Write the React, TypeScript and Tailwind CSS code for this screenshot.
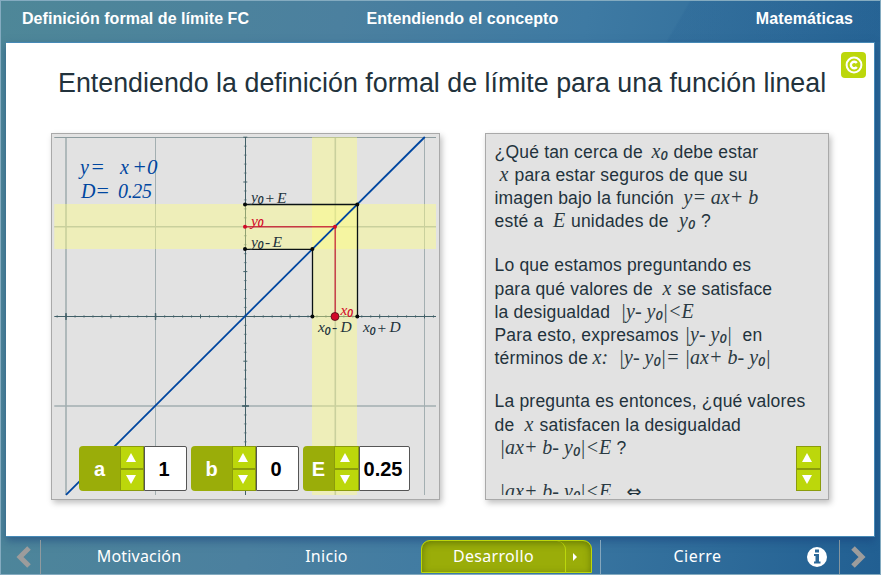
import type { ReactNode } from "react";

const SANS = "font-['Liberation_Sans',Arial,sans-serif]";
const SERIF = "font-['Liberation_Serif','Times_New_Roman',serif]";

function M({ children, w = "" }: { children: ReactNode; w?: string }) {
  return <span className={`inline-block ${SERIF} text-[20px] italic tracking-normal leading-[23px] text-[#2b3a43] ${w}`}>{children}</span>;
}

function Sub({ v }: { v: string }) {
  return (
    <>
      {v}
      <span className="relative top-[2px] font-['Open_Sans','Liberation_Sans',sans-serif] text-[13px] font-semibold leading-none">0</span>
    </>
  );
}

function T({ children, w = "" }: { children: ReactNode; w?: string }) {
  return <span className={`inline-block ${w}`}>{children}</span>;
}

function Line({ children }: { children: ReactNode }) {
  return <div className="flex h-[23px] items-baseline whitespace-pre leading-[23px]">{children}</div>;
}

function Spinner({ width }: { width: string }) {
  return (
    <div className={`flex h-[45px] flex-col border border-[#8b9c0b] bg-[#bcd70b] ${width}`}>
      <div className="flex flex-1 items-center justify-center border-b-2 border-[#8b9c0b] pr-[3px]">
        <svg width="10" height="9" viewBox="0 0 10 9"><path d="M5 0 10 9H0Z" fill="#fff" /></svg>
      </div>
      <div className="flex flex-1 items-center justify-center pr-[3px]">
        <svg width="10" height="9" viewBox="0 0 10 9"><path d="M5 9 10 0H0Z" fill="#fff" /></svg>
      </div>
    </div>
  );
}

function Control({ label, value, labelW, spinW, valueW }: { label: string; value: string; labelW: string; spinW: string; valueW: string }) {
  return (
    <div className="flex h-[45px] text-[20px] font-bold">
      <div className={`flex items-center justify-center rounded-l-[4px] bg-[#9aad09] text-white ${labelW}`}>{label}</div>
      <Spinner width={spinW} />
      <div className={`flex items-center justify-center rounded-r-[2px] border border-[#555] bg-white pr-[3px] text-black ${valueW}`}>{value}</div>
    </div>
  );
}

const OX = 245.3;
const OY = 316.4;
const U = 89.6;

function Zero({ x, y }: { x: number; y: number }) {
  return <text x={x} y={y} fontSize="11" fontWeight="600" fontFamily="'Open Sans', 'Liberation Sans', sans-serif">0</text>;
}

function Plot() {
  const minor = Array.from({ length: 43 }, (_, i) => i - 21);
  return (
    <svg className={`block ${SERIF}`} width="387" height="365" viewBox="52 134 387 365">
      <g stroke="#a3afb1" strokeWidth="1.2">
        <path d="M66 137V495" strokeWidth="1.6" />
        <path d="M155.5 137V495M424.5 137V495" strokeWidth="1" />
        <path d="M335.3 137V495M54.3 226.7H436M54.3 406H436" strokeWidth="1.6" />
        <path d="M54.3 137.5H436" stroke="#8d9c9f" strokeWidth="1" />
      </g>
      <g stroke="#426068" strokeWidth="1">
        <path d="M54.3 316.5H436M245.5 137V495" />
        {minor.map((i) => {
          const x = OX + (i * U) / 10;
          const y = OY - (i * U) / 10;
          const r = i % 5 === 0 ? 2 : 1.4;
          const op = i % 5 === 0 ? 1 : 0.6;
          return (
            <g key={i} opacity={op}>
              {x < 436 && x > 54.3 && <path d={`M${x} ${OY - r}V${OY + r}`} />}
              {y < 495 && y > 136 && <path d={`M${OX - r} ${y}H${OX + r}`} />}
            </g>
          );
        })}
        <path d="M66 313V320M155.5 313V320M242 406H249" strokeWidth="1.4" />
      </g>
      <rect x="54.3" y="204" width="381.7" height="45" fill="#ffff80" fillOpacity=".42" />
      <rect x="312" y="137" width="45" height="358" fill="#ffff80" fillOpacity=".42" />
      <path d="M66 494.8 424.8 137" stroke="#0046a0" strokeWidth="1.8" />
      <path d="M245 204.5H357.5V316.4M245 249.4H312.5V316.4" fill="none" stroke="#0a1214" strokeWidth="1.3" />
      <path d="M245 226.8H335.2V316.4" fill="none" stroke="#c8102e" strokeOpacity=".8" strokeWidth="1.4" />
      <g fill="#05090a">
        <circle cx="245" cy="204.4" r="2" /><circle cx="245" cy="249" r="2" />
        <circle cx="357.3" cy="204.4" r="2" /><circle cx="312.4" cy="249" r="2" />
        <circle cx="312.4" cy="316.4" r="2" /><circle cx="357.3" cy="316.4" r="2" />
      </g>
      <g fill="#d20a28">
        <circle cx="245" cy="226.7" r="2" /><circle cx="335" cy="226.7" r="2" />
        <circle cx="335" cy="316.5" r="4" stroke="#4a1018" strokeWidth=".8" />
      </g>
      <g fill="#0046a0" fontStyle="italic" fontSize="20">
        <text x="80" y="174">y</text><text x="91.500" y="174" fontStyle="normal" fontSize="22">=</text>
        <text x="120" y="174">x</text><text x="133.500" y="174" fontStyle="normal" fontSize="22">+</text><text x="147" y="174" fontSize="21">0</text>
        <text x="81" y="198">D</text><text x="96.500" y="198" fontStyle="normal" fontSize="22">=</text>
        <text x="118" y="198" textLength="34">0.25</text>
      </g>
      <g fill="#22323c" fontStyle="italic" fontSize="15.500">
        <text x="251" y="202">y</text><Zero x={257.5} y={204} />
        <text x="265.500" y="203" fontStyle="normal">+</text><text x="277" y="202.500">E</text>
        <text x="251" y="247">y</text><Zero x={257.5} y={249} />
        <text x="265" y="247" fontStyle="normal">-</text><text x="272.500" y="247.300">E</text>
        <text x="318" y="332">x</text><Zero x={324.5} y={334.5} />
        <text x="332" y="332" fontStyle="normal">-</text><text x="340.500" y="332.300">D</text>
        <text x="363" y="332">x</text><Zero x={369.5} y={334.5} />
        <text x="377.500" y="332.500" fontStyle="normal">+</text><text x="389.500" y="332.300">D</text>
      </g>
      <g fill="#d20a28" fontStyle="italic" fontSize="15.500">
        <text x="251" y="225.500">y</text><Zero x={257.5} y={227} />
        <text x="340.500" y="315">x</text><Zero x={347} y={316.5} />
      </g>
    </svg>
  );
}

export default function App() {
  const panel = "relative overflow-visible border border-[#a9a9a9] bg-[#e2e2e2] shadow-[2px_3px_6px_rgba(0,0,0,0.25)]";
  return (
    <div className={`flex h-[575px] w-[881px] flex-col overflow-hidden border border-[#84abc0] bg-[linear-gradient(100deg,#4e8798_0%,#4b809f_35%,#3e7aa3_60%,#2f6c9a_82%,#215f92_100%)] ${SANS}`}>
      <header className="flex h-[41px] shrink-0 justify-between bg-[linear-gradient(120deg,transparent_76.2%,rgba(25,85,140,0.15)_76.5%)] pl-[21px] pr-[27px] pt-[6px] text-[16px] font-bold leading-[24px] text-white">
        <span className="w-[344.5px] tracking-[0.04px]">Definición formal de límite FC</span>
        <span className="flex-1 whitespace-nowrap tracking-[0.07px]">Entendiendo el concepto</span>
        <span className="text-right tracking-[0.1px]">Matemáticas</span>
      </header>

      <main className="relative z-10 ml-[5px] mr-[5px] h-[495px] shrink-0 border-y border-r border-[#4689b6] bg-white shadow-[0_4px_8px_rgba(20,60,120,0.5)]">
        <div className="absolute right-[8px] top-[9px] flex h-[26px] w-[25px] items-center justify-center rounded-[4px] bg-[#bcd70b]">
          <svg width="18" height="18" viewBox="0 0 18 18" fill="none" stroke="#fff" strokeWidth="2">
            <circle cx="9" cy="9" r="7.400" />
            <path d="M11.800 7A3.300 3.300 0 1 0 11.800 11" strokeWidth="2.400" />
          </svg>
        </div>
        <h1 className="h-[90px] pl-[52px] pt-[24px] text-[26.800px] tracking-[0.015px] leading-[32px] whitespace-nowrap text-[#22323c]">
          Entendiendo la definición formal de límite para una función lineal
        </h1>
        <div className="flex gap-[45px] pl-[45px]">
          <section className={`h-[367px] w-[389px] ${panel}`}>
            <Plot />
            <div className="absolute left-[27px] top-[312px] flex gap-[4px]">
              <Control label="a" value="1" labelW="w-[41px]" spinW="w-[24px]" valueW="w-[43px]" />
              <Control label="b" value="0" labelW="w-[41px]" spinW="w-[24px]" valueW="w-[43px]" />
              <Control label="E" value="0.25" labelW="w-[31px]" spinW="w-[25px]" valueW="w-[51px]" />
            </div>
          </section>

          <section className={`h-[367px] w-[344px] ${panel}`}>
            <div className="h-[361px] overflow-hidden pl-[8.500px] pt-[6px] text-[17.500px] tracking-[0.2px] text-[#22323c]">
              <Line><T w="w-[157px]">¿Qué tan cerca de</T><M w="w-[22px]"><Sub v="x" /></M><T>debe estar</T></Line>
              <Line><M w="ml-[5px] w-[15px]">x</M><T>para estar seguros de que su</T></Line>
              <Line><T w="w-[189px]">imagen bajo la función</T><M>y= ax+ b</M></Line>
              <Line><T w="w-[58.500px]">esté a</T><M w="w-[18px]">E</M><T w="w-[108px]">unidades de</T><M w="w-[22px]"><Sub v="y" /></M><T>?</T></Line>
              <div className="h-[22px]" />
              <Line><T>Lo que estamos preguntando es</T></Line>
              <Line><T w="w-[168px]">para qué valores de</T><M w="w-[15px]">x</M><T>se satisface</T></Line>
              <Line><T w="w-[126px]">la desigualdad</T><M>|y- <Sub v="y" />|&lt;E</M></Line>
              <Line><T w="w-[190px]">Para esto, expresamos</T><M w="w-[58px]">|y- <Sub v="y" />|</M><T>en</T></Line>
              <Line><T w="w-[98px]">términos de</T><M w="w-[26px]">x:</M><M>|y- <Sub v="y" />|= |ax+ b- <Sub v="y" />|</M></Line>
              <div className="h-[21px]" />
              <Line><T>La pregunta es entonces, ¿qué valores</T></Line>
              <Line><T w="w-[30px]">de</T><M w="w-[15px]">x</M><T>satisfacen la desigualdad</T></Line>
              <Line><M w="ml-[5px] w-[117px]">|ax+ b- <Sub v="y" />|&lt;E</M><T>?</T></Line>
              <div className="h-[21px]" />
              <Line><M w="ml-[5px] w-[127px]">|ax+ b- <Sub v="y" />|&lt;E</M><span className="font-['DejaVu_Sans',sans-serif] text-[18px] leading-[23px]">⇔</span></Line>
            </div>
            <div className="absolute left-[310px] top-[312px]"><Spinner width="w-[25px]" /></div>
          </section>
        </div>
      </main>

      <footer className="relative z-20 flex h-[37px] shrink-0 pt-[3px] font-['Noto_Sans','Open_Sans',sans-serif] text-[16px] leading-[32px] text-white">
        <div className="flex w-[40px] items-center justify-center border-r border-[#8f9a9f] pl-[6px]">
          <svg width="16" height="22" viewBox="0 0 16 22"><path d="M13 2 4 11l9 9" fill="none" stroke="#9c9c9c" strokeWidth="5" /></svg>
        </div>
        <span className="w-[196px] text-center tracking-[0.2px]">Motivación</span>
        <span className="w-[179px] text-center tracking-[0.3px]">Inicio</span>
        <div className="ml-[5px] flex h-[33px] w-[171px] rounded-t-[9px] border border-[#bcd70b] bg-[#9aad09] shadow-[inset_0_2px_7px_rgba(70,90,0,0.6)]">
          <span className="w-[144px] rounded-tr-[9px] border-r border-[#bcd70b] text-center leading-[30px] tracking-[0.3px]">Desarrollo</span>
          <span className="flex flex-1 items-center justify-center pr-[8px]"><svg width="4" height="8" viewBox="0 0 4 8"><path d="M0 0 4 4 0 8Z" fill="#fff" /></svg></span>
        </div>
        <span className="ml-[8px] w-[207px] border-l border-[#84a6bd] pr-[13px] text-center tracking-[0.5px]">Cierre</span>
        <div className="flex w-[32px] items-center">
          <svg width="20" height="20" viewBox="0 0 20 20"><circle cx="10" cy="10" r="10" fill="#fff" /><path d="M8 2.500H12V5.500H8ZM7 7H12V14.500H13.500V16.500H7V14.500H8.500V9H7Z" fill="#2b6898" /></svg>
        </div>
        <div className="flex flex-1 items-center justify-center border-l border-[#84959f] pr-[5px]">
          <svg width="16" height="22" viewBox="0 0 16 22"><path d="M3 2 12 11 3 20" fill="none" stroke="#9c9c9c" strokeWidth="5" /></svg>
        </div>
      </footer>
    </div>
  );
}
